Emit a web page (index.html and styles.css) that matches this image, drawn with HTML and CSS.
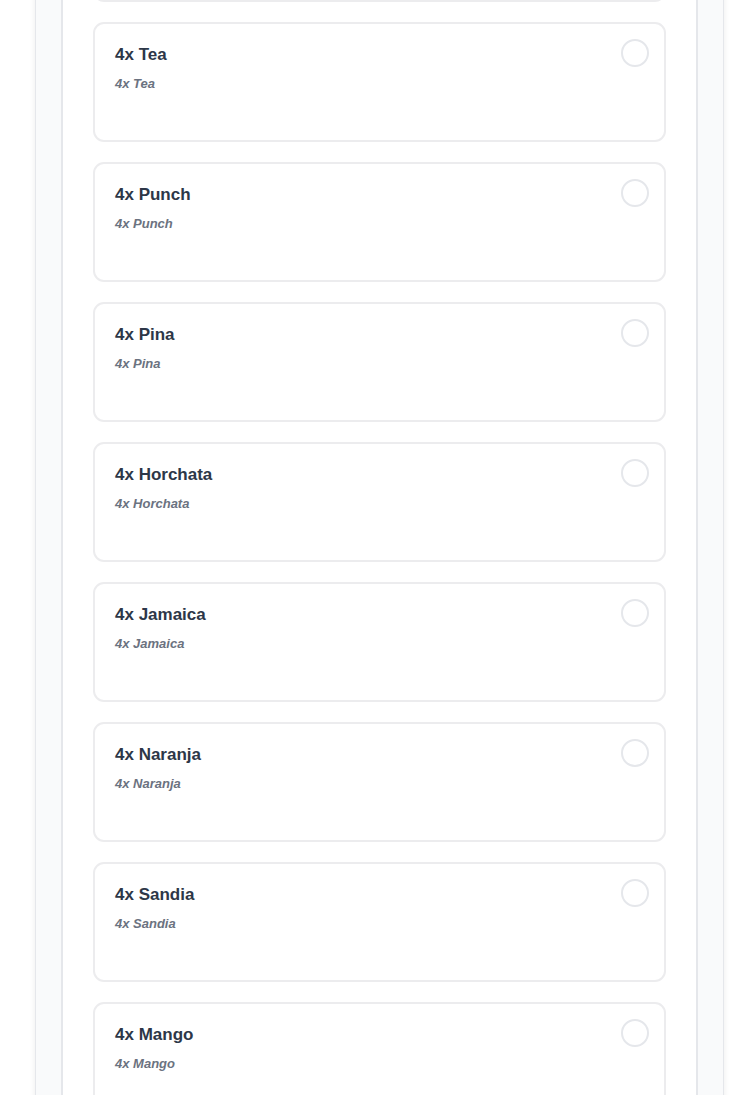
FILE: index.html
```html
<!DOCTYPE html>
<html>
<head>
<meta charset="utf-8">
<link rel="stylesheet" href="styles.css">
</head>
<body>
<div class="shell">
  <div class="panel">
    <div class="list">
      <div class="card"><div class="text"><div class="title">4x Agua</div><div class="sub">4x Agua</div></div><span class="radio"></span></div>
      <div class="card"><div class="text"><div class="title">4x Tea</div><div class="sub">4x Tea</div></div><span class="radio"></span></div>
      <div class="card"><div class="text"><div class="title">4x Punch</div><div class="sub">4x Punch</div></div><span class="radio"></span></div>
      <div class="card"><div class="text"><div class="title">4x Pina</div><div class="sub">4x Pina</div></div><span class="radio"></span></div>
      <div class="card"><div class="text"><div class="title">4x Horchata</div><div class="sub">4x Horchata</div></div><span class="radio"></span></div>
      <div class="card"><div class="text"><div class="title">4x Jamaica</div><div class="sub">4x Jamaica</div></div><span class="radio"></span></div>
      <div class="card"><div class="text"><div class="title">4x Naranja</div><div class="sub">4x Naranja</div></div><span class="radio"></span></div>
      <div class="card"><div class="text"><div class="title">4x Sandia</div><div class="sub">4x Sandia</div></div><span class="radio"></span></div>
      <div class="card"><div class="text"><div class="title">4x Mango</div><div class="sub">4x Mango</div></div><span class="radio"></span></div>
    </div>
  </div>
</div>
</body>
</html>
```
FILE: styles.css
```css
html, body {
  margin: 0;
  padding: 0;
  background: #ffffff;
  font-family: "Liberation Sans", Arial, sans-serif;
  overflow: hidden;
}
.shell {
  margin: -118px 26px 0 35px;
  background: #f9fafb;
  border-left: 1px solid #e5e7eb;
  border-right: 1px solid #e5e7eb;
  box-shadow: 0 0 6px rgba(0,0,0,0.08);
  padding: 0 25px;
  height: 1400px;
}
.panel {
  background: #ffffff;
  border-left: 2px solid #e5e7eb;
  border-right: 2px solid #e5e7eb;
  padding: 0 30px 0 30px;
  height: 100%;
}
.list {
  display: flex;
  flex-direction: column;
  gap: 20px;
}
.card {
  box-sizing: border-box;
  height: 120px;
  border: 2px solid #ececee;
  border-radius: 11px;
  padding: 17px 15px 0 20px;
  display: flex;
  justify-content: space-between;
  align-items: flex-start;
}
.title {
  font-size: 17px;
  font-weight: bold;
  color: #2d3748;
  line-height: 24px;
  margin-top: 2px;
}
.sub {
  margin-top: 8px;
  font-size: 13px;
  font-style: italic;
  font-weight: bold;
  color: #6b7280;
  line-height: 18px;
}
.radio {
  width: 24px;
  height: 24px;
  margin-top: -2px;
  border: 2px solid #e5e7eb;
  border-radius: 50%;
  box-sizing: content-box;
}
```
